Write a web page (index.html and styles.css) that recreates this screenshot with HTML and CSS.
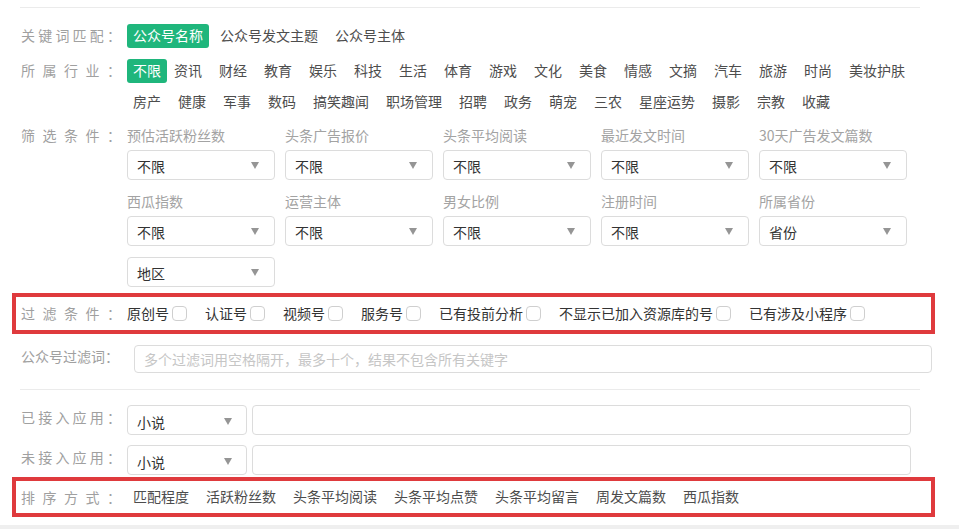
FILE: index.html
```html
<!DOCTYPE html>
<html lang="zh-CN">
<head>
<meta charset="utf-8">
<title>筛选</title>
<link rel="stylesheet" href="styles.css">
</head>
<body>
<div class="page">
  <div class="rule"></div>

  <div class="row kw">
    <span class="label">关键词匹配：</span>
    <div class="opts">
      <span class="opt active">公众号名称</span>
      <span class="opt">公众号发文主题</span>
      <span class="opt">公众号主体</span>
    </div>
  </div>

  <div class="row industry">
    <span class="label">所属行业：</span>
    <div class="opts wrap">
      <span class="opt active">不限</span>
      <span class="opt">资讯</span>
      <span class="opt">财经</span>
      <span class="opt">教育</span>
      <span class="opt">娱乐</span>
      <span class="opt">科技</span>
      <span class="opt">生活</span>
      <span class="opt">体育</span>
      <span class="opt">游戏</span>
      <span class="opt">文化</span>
      <span class="opt">美食</span>
      <span class="opt">情感</span>
      <span class="opt">文摘</span>
      <span class="opt">汽车</span>
      <span class="opt">旅游</span>
      <span class="opt">时尚</span>
      <span class="opt">美妆护肤</span>
      <span class="opt">房产</span>
      <span class="opt">健康</span>
      <span class="opt">军事</span>
      <span class="opt">数码</span>
      <span class="opt">搞笑趣闻</span>
      <span class="opt">职场管理</span>
      <span class="opt">招聘</span>
      <span class="opt">政务</span>
      <span class="opt">萌宠</span>
      <span class="opt">三农</span>
      <span class="opt">星座运势</span>
      <span class="opt">摄影</span>
      <span class="opt">宗教</span>
      <span class="opt">收藏</span>
    </div>
  </div>

  <div class="row filters">
    <span class="label">筛选条件：</span>
    <div class="grid">
      <div class="field"><div class="flabel">预估活跃粉丝数</div><div class="select"><span>不限</span><i class="caret"></i></div></div>
      <div class="field"><div class="flabel">头条广告报价</div><div class="select"><span>不限</span><i class="caret"></i></div></div>
      <div class="field"><div class="flabel">头条平均阅读</div><div class="select"><span>不限</span><i class="caret"></i></div></div>
      <div class="field"><div class="flabel">最近发文时间</div><div class="select"><span>不限</span><i class="caret"></i></div></div>
      <div class="field"><div class="flabel">30天广告发文篇数</div><div class="select"><span>不限</span><i class="caret"></i></div></div>
      <div class="field"><div class="flabel">西瓜指数</div><div class="select"><span>不限</span><i class="caret"></i></div></div>
      <div class="field"><div class="flabel">运营主体</div><div class="select"><span>不限</span><i class="caret"></i></div></div>
      <div class="field"><div class="flabel">男女比例</div><div class="select"><span>不限</span><i class="caret"></i></div></div>
      <div class="field"><div class="flabel">注册时间</div><div class="select"><span>不限</span><i class="caret"></i></div></div>
      <div class="field"><div class="flabel">所属省份</div><div class="select"><span>省份</span><i class="caret"></i></div></div>
      <div class="field nolabel"><div class="select"><span>地区</span><i class="caret"></i></div></div>
    </div>
  </div>

  <div class="row boxed checks">
    <span class="label">过滤条件：</span>
    <div class="checklist">
      <label class="check">原创号<i class="cb"></i></label>
      <label class="check">认证号<i class="cb"></i></label>
      <label class="check">视频号<i class="cb"></i></label>
      <label class="check">服务号<i class="cb"></i></label>
      <label class="check">已有投前分析<i class="cb"></i></label>
      <label class="check">不显示已加入资源库的号<i class="cb"></i></label>
      <label class="check">已有涉及小程序<i class="cb"></i></label>
    </div>
  </div>

  <div class="row words">
    <span class="label plain">公众号过滤词：</span>
    <div class="input"><span class="ph">多个过滤词用空格隔开，最多十个，结果不包含所有关键字</span></div>
  </div>

  <div class="rule second"></div>

  <div class="row app">
    <span class="label">已接入应用：</span>
    <div class="select small"><span>小说</span><i class="caret"></i></div>
    <div class="input app-input"></div>
  </div>

  <div class="row app app2">
    <span class="label">未接入应用：</span>
    <div class="select small"><span>小说</span><i class="caret"></i></div>
    <div class="input app-input"></div>
  </div>

  <div class="row boxed sort">
    <span class="label">排序方式：</span>
    <div class="opts">
      <span class="opt">匹配程度</span>
      <span class="opt">活跃粉丝数</span>
      <span class="opt">头条平均阅读</span>
      <span class="opt">头条平均点赞</span>
      <span class="opt">头条平均留言</span>
      <span class="opt">周发文篇数</span>
      <span class="opt">西瓜指数</span>
    </div>
  </div>
</div>
</body>
</html>
```

FILE: styles.css
```css
* { box-sizing: border-box; }

html, body {
  margin: 0;
  padding: 0;
  background: #efefef;
}

body {
  font-family: "Noto Sans CJK SC", "Noto Sans", "Liberation Sans", sans-serif;
  font-size: 14px;
  color: #333;
}

.page {
  background: #fff;
  padding: 7px 24px 8px 12px;
}

.rule {
  height: 1px;
  width: 900px;
  margin-left: 8px;
  background: #ebebeb;
}

.rule.second {
  margin-top: 16px;
}

.row {
  display: flex;
  align-items: flex-start;
  padding-left: 9px;
}

.label {
  flex: none;
  display: block;
  width: 100px;
  margin-right: 6px;
  color: #a0a0a0;
  text-align: justify;
  text-align-last: justify;
  line-height: 23px;
  white-space: nowrap;
}

.label.plain {
  width: 102px;
  margin-right: 11px;
  text-align: left;
  text-align-last: auto;
  line-height: 22px;
}

.opts {
  display: flex;
  flex-wrap: nowrap;
  align-items: center;
}

.opts.wrap {
  flex-wrap: wrap;
  row-gap: 7px;
}

.opt {
  flex: none;
  height: 24px;
  line-height: 23px;
  padding: 0 6px;
  margin-right: 5px;
  color: #4d4d4d;
  border-radius: 3px;
  white-space: nowrap;
}

.opt.active {
  background: #1fb67c;
  color: #fff;
}

.industry .opt.active {
  margin-right: 1px;
}

.kw {
  margin-top: 16px;
}

.industry {
  margin-top: 11px;
}

.filters {
  margin-top: 12px;
}

.filters .label {
  line-height: 19px;
}

.grid {
  display: grid;
  grid-template-columns: repeat(5, 148px);
  column-gap: 10px;
  row-gap: 12px;
}

.flabel {
  line-height: 19px;
  height: 20px;
  margin-bottom: 4px;
  color: #a3a3a3;
  white-space: nowrap;
}

.field.nolabel {
  margin-top: -1px;
}

.select {
  height: 30px;
  border: 1px solid #dcdcdc;
  border-radius: 4px;
  padding: 1px 15px 0 9px;
  display: flex;
  align-items: center;
  justify-content: space-between;
  color: #333;
  background: #fff;
}

.select.small {
  flex: none;
  width: 120px;
  margin-right: 5px;
  padding: 3px 14px 0 9px;
}

.caret {
  display: block;
  width: 0;
  height: 0;
  border-top: 7px solid #959595;
  border-left: 4.5px solid transparent;
  border-right: 4.5px solid transparent;
}

.boxed {
  border: 4px solid #df3a3d;
  padding-left: 5px;
  align-items: center;
}

.checks {
  margin-top: 6px;
  height: 41px;
  padding-bottom: 2px;
}

.checks .label,
.sort .label {
  line-height: 22px;
}

.checklist {
  display: flex;
  align-items: center;
}

.check {
  display: flex;
  align-items: center;
  line-height: 22px;
  margin-right: 18px;
  color: #333;
  white-space: nowrap;
}

.cb {
  display: block;
  width: 15px;
  height: 15px;
  margin-left: 3px;
  margin-top: 1px;
  border: 1px solid #cfcfcf;
  border-radius: 4px;
  background: #fff;
}

.words {
  margin-top: 11px;
}

.input {
  flex: 1;
  height: 28px;
  border: 1px solid #dcdcdc;
  border-radius: 4px;
  padding-left: 9px;
  display: flex;
  align-items: center;
  margin-right: 3px;
  background: #fff;
}

.ph {
  color: #c6c6c6;
  white-space: nowrap;
}

.app {
  margin-top: 15px;
}

.app .label {
  line-height: 25px;
}

.app2 {
  margin-top: 10px;
}

.app-input {
  height: 30px;
  margin-right: 24px;
}

.sort {
  margin-top: 2px;
  height: 40px;
}
```
